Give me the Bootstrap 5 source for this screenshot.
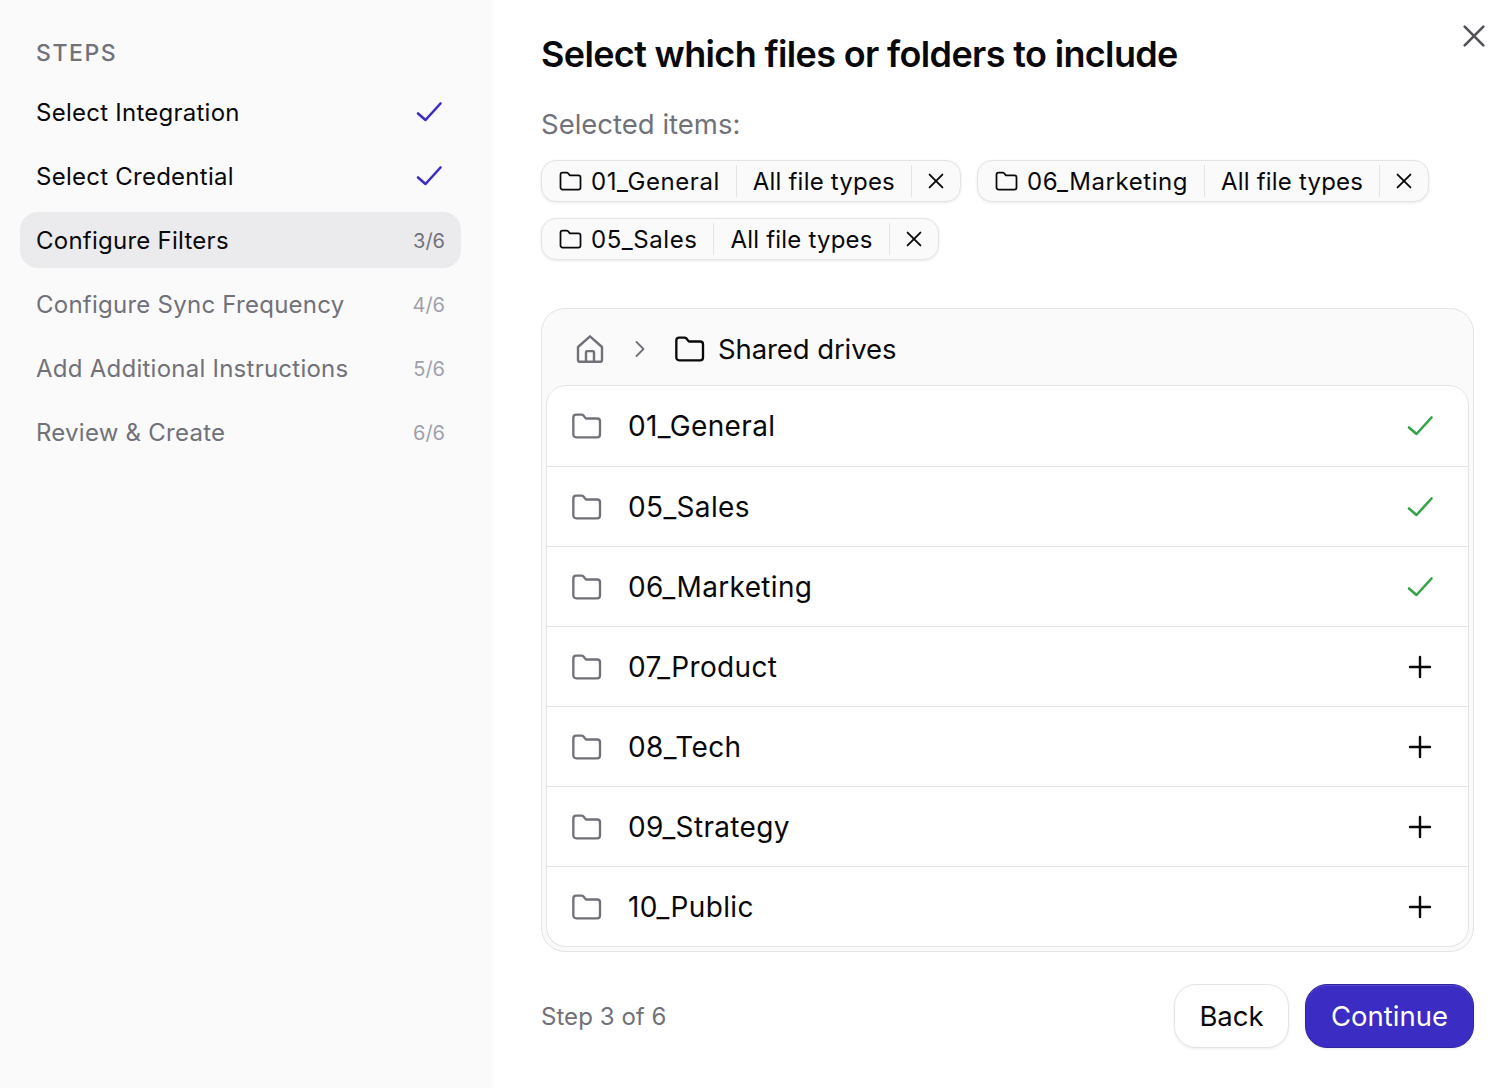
<!DOCTYPE html>
<html lang="en">
<head>
    <meta charset="UTF-8">
    <meta name="viewport" content="width=device-width, initial-scale=1.0">
    <title>Configure Filters</title>
    <link href="https://cdn.jsdelivr.net/npm/bootstrap@5.3.3/dist/css/bootstrap.min.css" rel="stylesheet">
    <script src="https://cdn.jsdelivr.net/npm/bootstrap@5.3.3/dist/js/bootstrap.bundle.min.js"></script>
    <style>
        body {
            font-family: Inter, "Liberation Sans", sans-serif;
            color: #09090b;
            background: #fff;
            height: 1088px;
            overflow: hidden;
        }
        .sidebar {
            width: 493px;
            height: 1088px;
            background: #fafafa;
            padding: 38px 32px 0 20px;
        }
        .steps-title {
            font-size: 23px;
            line-height: 30px;
            font-weight: 500;
            letter-spacing: 1.55px;
            color: #71717a;
            padding-left: 16px;
            margin-bottom: 16px;
        }
        .step {
            height: 56px;
            margin-bottom: 8px;
            padding: 0 16px;
            border-radius: 18px;
            font-size: 24px;
            letter-spacing: .25px;
        }
        .step span { padding-top: 2px; }
        .step svg { margin-right: 2px; }
        .step.active { background: #ebebed; }
        .step.todo { color: #71717a; }
        .step .count { font-size: 20px; color: #71717a; letter-spacing: 0; }
        .step.todo .count { color: #a1a1aa; }
        .ic-brand { color: #3b2cc4; }
        .ic-green { color: #34a34a; }
        .ic-muted { color: #71717a; }
        .main { padding: 0 38px 0 48px; position: relative; }
        .close-x { position: absolute; top: 20px; right: 22px; color: #52525b; }
        h1.title {
            font-size: 36px;
            line-height: 44px;
            font-weight: 600;
            margin: 32px 0 0;
            letter-spacing: -.65px;
        }
        .sel-label {
            font-size: 27.5px;
            line-height: 36px;
            color: #71717a;
            margin-top: 30px;
            margin-bottom: 18px;
        }
        .chips { column-gap: 16px; row-gap: 16px; height: 100px; }
        .chip {
            height: 42px;
            background: #fafafa;
            border: 1px solid #e4e4e7;
            border-radius: 15px;
            box-shadow: 0 1px 3px rgba(0,0,0,.09);
            font-size: 24px;
        }
        .chip > div {
            height: 32px;
            padding: 0 16px;
            border-right: 1px solid #e4e4e7;
        }
        .chip-name { letter-spacing: .55px; gap: 9px; }
        .chip-name span, .chip-type span { padding-top: 2px; }
        .chip-type { letter-spacing: .2px; }
        .chip > .chip-del { border-right: 0; padding: 0 13px; }
        .browser {
            margin-top: 48px;
            background: #fafafa;
            border: 1px solid #e4e4e7;
            border-radius: 24px;
            padding: 0 4px 4px;
            height: 644px;
        }
        .crumbs {
            height: 76px;
            padding: 4px 0 0 28px;
            font-size: 27.5px;
            letter-spacing: -.1px;
        }
        .crumbs span { padding-top: 2px; }
        .crumb-sep { margin-left: 24px; }
        .crumb-folder { margin: 0 13px 0 23px; }
        .files {
            --bs-list-group-border-color: #e4e4e7;
            --bs-list-group-border-radius: 20px;
            --bs-list-group-color: #09090b;
        }
        .files .list-group-item {
            height: 80px;
            padding: 0 36px 0 23px;
            font-size: 28px;
            letter-spacing: .35px;
        }
        .files .list-group-item:first-child { height: 82px; }
        .files .name { margin-left: 26px; }
        .files .done-icon { margin-right: -2px; }
        .foot { margin-top: 32px; }
        .foot .step-no { font-size: 24px; color: #71717a; padding-top: 2px; letter-spacing: .05px; }
        .btn-foot {
            height: 64px;
            border-radius: 22px;
            font-size: 27.5px;
            padding-top: 8px;
            box-shadow: 0 1px 3px rgba(0,0,0,.08);
        }
        .btn-back { width: 115px; background: #fff; border: 1px solid #e4e4e7; color: #09090b; }
        .btn-go {
            width: 169px;
            background: #3b2cc4;
            border: 1px solid #32249f;
            color: #fff;
            box-shadow: inset 0 1px 0 rgba(255,255,255,.14), 0 1px 3px rgba(0,0,0,.08);
        }
        .btn-back:hover { background: #fafafa; }
        .btn-go:hover { background: #32249f; color: #fff; }
    </style>
</head>
<body>
<svg class="d-none">
    <symbol id="folder" viewBox="0 0 24 24" fill="none" stroke="currentColor" stroke-width="1.75" stroke-linecap="round" stroke-linejoin="round">
        <path d="M2.5 5.6c0-1.200.9-2.100 2.100-2.100h4c.6 0 1.100.2 1.500.7l1.400 1.700c.2.3.6.5 1 .5h7.900c1.200 0 2.100.9 2.100 2.100v9.900c0 1.200-.9 2.100-2.100 2.100H4.600c-1.200 0-2.100-.9-2.100-2.100z"/>
    </symbol>
    <symbol id="cross" viewBox="0 0 24 24" fill="none" stroke="currentColor" stroke-width="2" stroke-linecap="round">
        <path d="M5 5l14 14M19 5L5 19"/>
    </symbol>
    <symbol id="check" viewBox="0 0 28 28" fill="none" stroke="currentColor" stroke-width="2.6" stroke-linecap="round" stroke-linejoin="round">
        <path d="M3 15.500l7.500 6.500L25.500 5.500"/>
    </symbol>
    <symbol id="plus" viewBox="0 0 24 24" fill="none" stroke="currentColor" stroke-width="2.4" stroke-linecap="round">
        <path d="M12 2v20M2 12h20"/>
    </symbol>
</svg>

<div class="d-flex">
    <aside class="sidebar flex-shrink-0">
        <div class="steps-title">STEPS</div>
        <div class="step d-flex align-items-center justify-content-between">
            <span>Select Integration</span>
            <svg class="ic-brand" width="28" height="28"><use href="#check"/></svg>
        </div>
        <div class="step d-flex align-items-center justify-content-between">
            <span>Select Credential</span>
            <svg class="ic-brand" width="28" height="28"><use href="#check"/></svg>
        </div>
        <div class="step active d-flex align-items-center justify-content-between">
            <span>Configure Filters</span><span class="count">3/6</span>
        </div>
        <div class="step todo d-flex align-items-center justify-content-between">
            <span>Configure Sync Frequency</span><span class="count">4/6</span>
        </div>
        <div class="step todo d-flex align-items-center justify-content-between">
            <span>Add Additional Instructions</span><span class="count">5/6</span>
        </div>
        <div class="step todo d-flex align-items-center justify-content-between">
            <span>Review &amp; Create</span><span class="count">6/6</span>
        </div>
    </aside>

    <main class="main flex-grow-1">
        <svg class="close-x" width="32" height="32"><use href="#cross"/></svg>
        <h1 class="title">Select which files or folders to include</h1>
        <div class="sel-label">Selected items:</div>

        <div class="chips d-flex flex-wrap align-content-start">
            <div class="chip d-flex align-items-center">
                <div class="chip-name d-flex align-items-center"><svg width="24" height="24"><use href="#folder"/></svg><span>01_General</span></div>
                <div class="chip-type d-flex align-items-center"><span>All file types</span></div>
                <div class="chip-del d-flex align-items-center"><svg width="22" height="22"><use href="#cross"/></svg></div>
            </div>
            <div class="chip d-flex align-items-center">
                <div class="chip-name d-flex align-items-center"><svg width="24" height="24"><use href="#folder"/></svg><span>06_Marketing</span></div>
                <div class="chip-type d-flex align-items-center"><span>All file types</span></div>
                <div class="chip-del d-flex align-items-center"><svg width="22" height="22"><use href="#cross"/></svg></div>
            </div>
            <div class="chip d-flex align-items-center">
                <div class="chip-name d-flex align-items-center"><svg width="24" height="24"><use href="#folder"/></svg><span>05_Sales</span></div>
                <div class="chip-type d-flex align-items-center"><span>All file types</span></div>
                <div class="chip-del d-flex align-items-center"><svg width="22" height="22"><use href="#cross"/></svg></div>
            </div>
        </div>

        <div class="browser">
            <div class="crumbs d-flex align-items-center">
                <svg width="32" height="32" viewBox="0 0 24 24" fill="none" stroke="#71717a" stroke-width="1.8" stroke-linejoin="round">
                    <path d="M3 10.500 12 2.500l9 8v9.500c0 .9-.7 1.600-1.600 1.600H4.600c-.9 0-1.600-.7-1.600-1.600z"/>
                    <path d="M9 21.500V14.500c0-.5.4-.9.9-.9h4.200c.5 0 .9.4.9.9v7"/>
                </svg>
                <svg class="crumb-sep" width="20" height="20" viewBox="0 0 20 20" fill="none" stroke="#71717a" stroke-width="1.8" stroke-linecap="round" stroke-linejoin="round">
                    <path d="M6.500 3l7 7-7 7"/>
                </svg>
                <svg class="crumb-folder" width="32" height="32"><use href="#folder"/></svg>
                <span>Shared drives</span>
            </div>
            <div class="list-group files bg-white">
                <div class="list-group-item d-flex align-items-center">
                    <svg class="ic-muted" width="32" height="32"><use href="#folder"/></svg><span class="name flex-grow-1">01_General</span>
                    <svg class="ic-green done-icon" width="28" height="28"><use href="#check"/></svg>
                </div>
                <div class="list-group-item d-flex align-items-center">
                    <svg class="ic-muted" width="32" height="32"><use href="#folder"/></svg><span class="name flex-grow-1">05_Sales</span>
                    <svg class="ic-green done-icon" width="28" height="28"><use href="#check"/></svg>
                </div>
                <div class="list-group-item d-flex align-items-center">
                    <svg class="ic-muted" width="32" height="32"><use href="#folder"/></svg><span class="name flex-grow-1">06_Marketing</span>
                    <svg class="ic-green done-icon" width="28" height="28"><use href="#check"/></svg>
                </div>
                <div class="list-group-item d-flex align-items-center">
                    <svg class="ic-muted" width="32" height="32"><use href="#folder"/></svg><span class="name flex-grow-1">07_Product</span>
                    <svg width="24" height="24"><use href="#plus"/></svg>
                </div>
                <div class="list-group-item d-flex align-items-center">
                    <svg class="ic-muted" width="32" height="32"><use href="#folder"/></svg><span class="name flex-grow-1">08_Tech</span>
                    <svg width="24" height="24"><use href="#plus"/></svg>
                </div>
                <div class="list-group-item d-flex align-items-center">
                    <svg class="ic-muted" width="32" height="32"><use href="#folder"/></svg><span class="name flex-grow-1">09_Strategy</span>
                    <svg width="24" height="24"><use href="#plus"/></svg>
                </div>
                <div class="list-group-item d-flex align-items-center">
                    <svg class="ic-muted" width="32" height="32"><use href="#folder"/></svg><span class="name flex-grow-1">10_Public</span>
                    <svg width="24" height="24"><use href="#plus"/></svg>
                </div>
            </div>
        </div>

        <div class="foot d-flex align-items-center justify-content-between">
            <span class="step-no">Step 3 of 6</span>
            <div class="d-flex gap-3">
                <button type="button" class="btn btn-foot btn-back">Back</button>
                <button type="button" class="btn btn-foot btn-go">Continue</button>
            </div>
        </div>
    </main>
</div>
</body>
</html>
